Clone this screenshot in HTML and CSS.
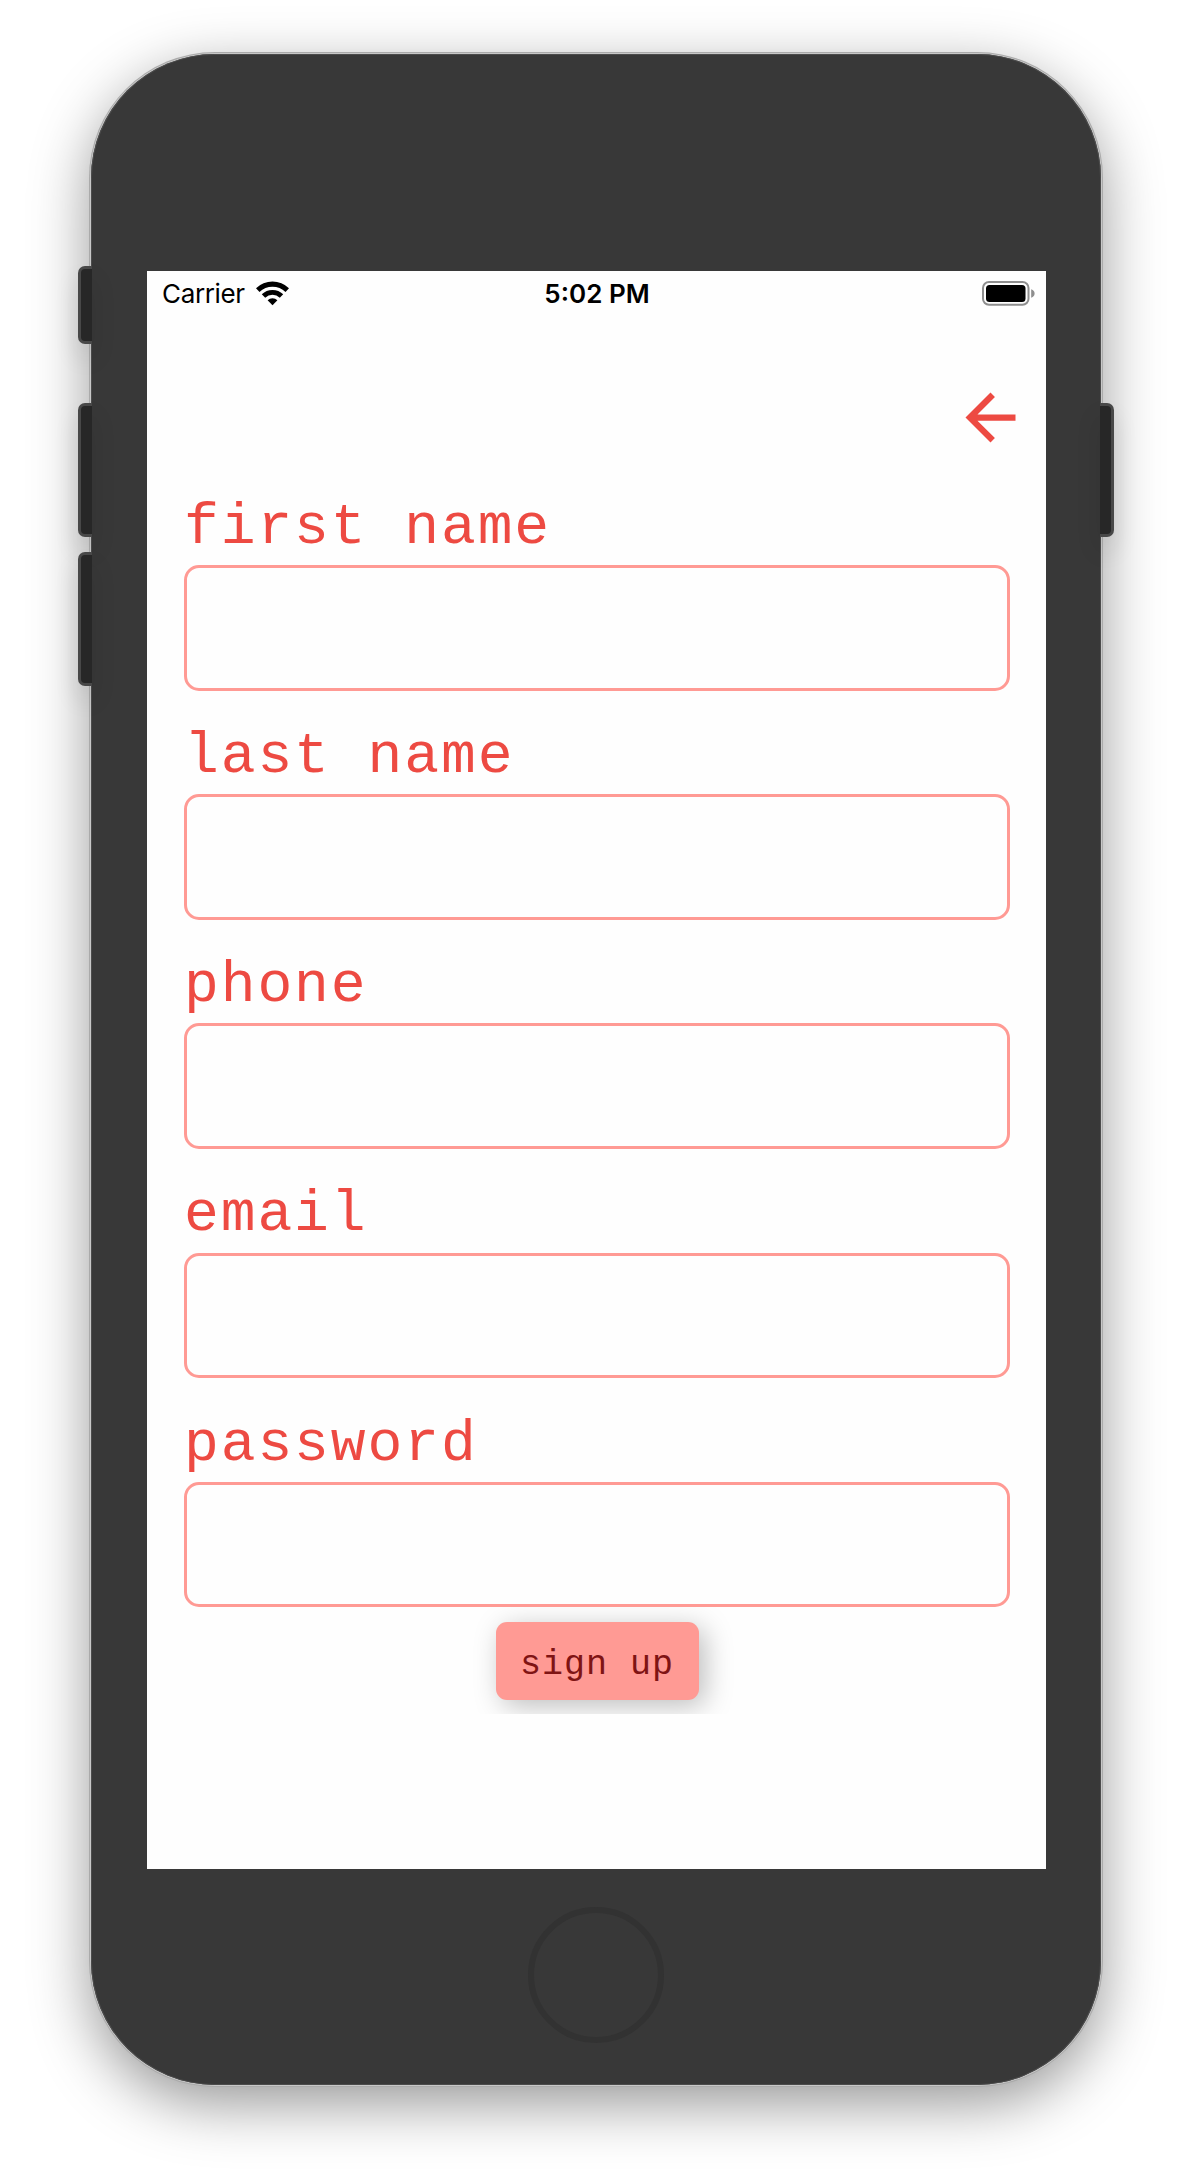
FILE: index.html
```html
<!DOCTYPE html>
<html lang="en">
<head>
<meta charset="utf-8">
<title>Sign up</title>
<link rel="stylesheet" href="styles.css">
</head>
<body>
<div class="phone">
  <span class="key key-mute"></span>
  <span class="key key-up"></span>
  <span class="key key-down"></span>
  <span class="key key-power"></span>
  <main class="screen">
    <header class="status">
      <div class="status-left">
        <span class="carrier">Carrier</span>
        <svg class="wifi" width="33" height="25" viewBox="0 0 33 25">
          <path d="M0 7.3A23.7 23.7 0 0 1 33 7.3L29.5 11A18.6 18.6 0 0 0 3.5 11Z"/>
          <path d="M5.8 13.2A15.4 15.4 0 0 1 27.2 13.2L23.8 16.7A10.6 10.6 0 0 0 9.2 16.7Z"/>
          <path d="M11.6 19.2A7 7 0 0 1 21.4 19.2L16.5 24.2Z"/>
        </svg>
      </div>
      <span class="time">5:02 PM</span>
      <svg class="battery" width="53" height="25" viewBox="0 0 53 25">
        <rect x="1" y="1" width="45.5" height="22.8" rx="6" fill="none" stroke="#8e8e8e" stroke-width="2"/>
        <rect x="4" y="4" width="39.5" height="17" rx="3.5"/>
        <path d="M49.2 8.2Q52.6 9.4 52.6 12.5T49.2 16.8Z" fill="#8e8e8e"/>
      </svg>
    </header>
    <nav class="nav">
      <svg class="back" width="75" height="75" viewBox="0 0 24 24"><path d="M20 11H7.83l5.59-5.59L12 4l-8 8 8 8 1.41-1.41L7.83 13H20z"/></svg>
    </nav>
    <form class="form">
      <label class="label" for="first">first name</label>
      <input class="input" id="first" type="text">
      <label class="label" for="last">last name</label>
      <input class="input" id="last" type="text">
      <label class="label" for="phone">phone</label>
      <input class="input" id="phone" type="text">
      <label class="label" for="email">email</label>
      <input class="input" id="email" type="text">
      <label class="label" for="password">password</label>
      <input class="input" id="password" type="password">
      <div class="actions"><button class="submit" type="button">sign up</button></div>
    </form>
  </main>
  <span class="home"></span>
</div>
</body>
</html>
```
FILE: styles.css
```css
* { box-sizing: border-box; }
body {
  margin: 0;
  height: 2172px;
  padding: 54px 0 0 91px;
  background: #fff;
  overflow: hidden;
}
.phone {
  position: relative;
  display: flex;
  flex-direction: column;
  align-items: center;
  width: 1010px;
  height: 2031px;
  padding-top: 217px;
  border-radius: 124px;
  background: #383838;
  box-shadow: inset 0 0 0 1px #4c4c4c, 0 0 0 1px #c8c8c8, 0 0 0 2px #aaa, 0 18px 60px rgba(0, 0, 0, .42);
}
.key {
  position: absolute;
  left: -13px;
  width: 14px;
  height: 134px;
  border: 3px solid #484848;
  border-right-width: 0;
  border-radius: 7px 0 0 7px;
  background: #272727;
  box-shadow: 0 14px 24px rgba(0, 0, 0, .12);
}
.key-mute { top: 212px; height: 78px; }
.key-up { top: 349px; }
.key-down { top: 498px; }
.key-power {
  top: 349px;
  left: 1009px;
  border-right-width: 3px;
  border-left-width: 0;
  border-radius: 0 7px 7px 0;
}
.screen {
  width: 899px;
  height: 1598px;
  margin-left: 1px;
  background: #fefefe;
}
.status {
  display: grid;
  grid-template-columns: 1fr auto 1fr;
  align-items: center;
  height: 45px;
  padding: 0 11px 0 15px;
  font-family: Inter, "Liberation Sans", sans-serif;
  font-size: 26px;
  line-height: 45px;
  color: #000;
}
.status-left { display: flex; align-items: center; gap: 11px; }
.carrier { letter-spacing: -.35px; }
.time { margin-left: -3px; font-weight: 600; }
.battery { justify-self: end; }
.nav {
  display: flex;
  justify-content: flex-end;
  height: 145.5px;
  padding: 63.5px 18.5px 0 0;
}
.back { fill: #ed4a42; }
.form {
  display: flex;
  flex-direction: column;
  padding: 0 36px 0 37px;
}
.label {
  height: 74.1px;
  margin-top: 29.7px;
  font: 58px/74.1px "Liberation Mono", monospace;
  letter-spacing: 1.9px;
  color: #ed4a42;
}
.input {
  width: 100%;
  height: 125.3px;
  margin: 0;
  padding: 0 20px;
  border: 3px solid #ff9a94;
  border-radius: 15px;
  background: #fefefe;
  font: 48px "Liberation Mono", monospace;
  outline: none;
}
.actions {
  display: flex;
  justify-content: center;
  height: 107px;
  padding-top: 15px;
  overflow: hidden;
}
.submit {
  width: 203px;
  height: 78px;
  padding: 8px 0 0;
  border: 0;
  border-radius: 11px;
  background: #ff9a94;
  box-shadow: 6px 6px 28px rgba(0, 0, 0, .26);
  font: 35px "Liberation Mono", monospace;
  letter-spacing: 1px;
  color: #7f1414;
}
.home {
  width: 136px;
  height: 136px;
  margin-top: 38px;
  border: 6px solid #323232;
  border-radius: 50%;
}
```
